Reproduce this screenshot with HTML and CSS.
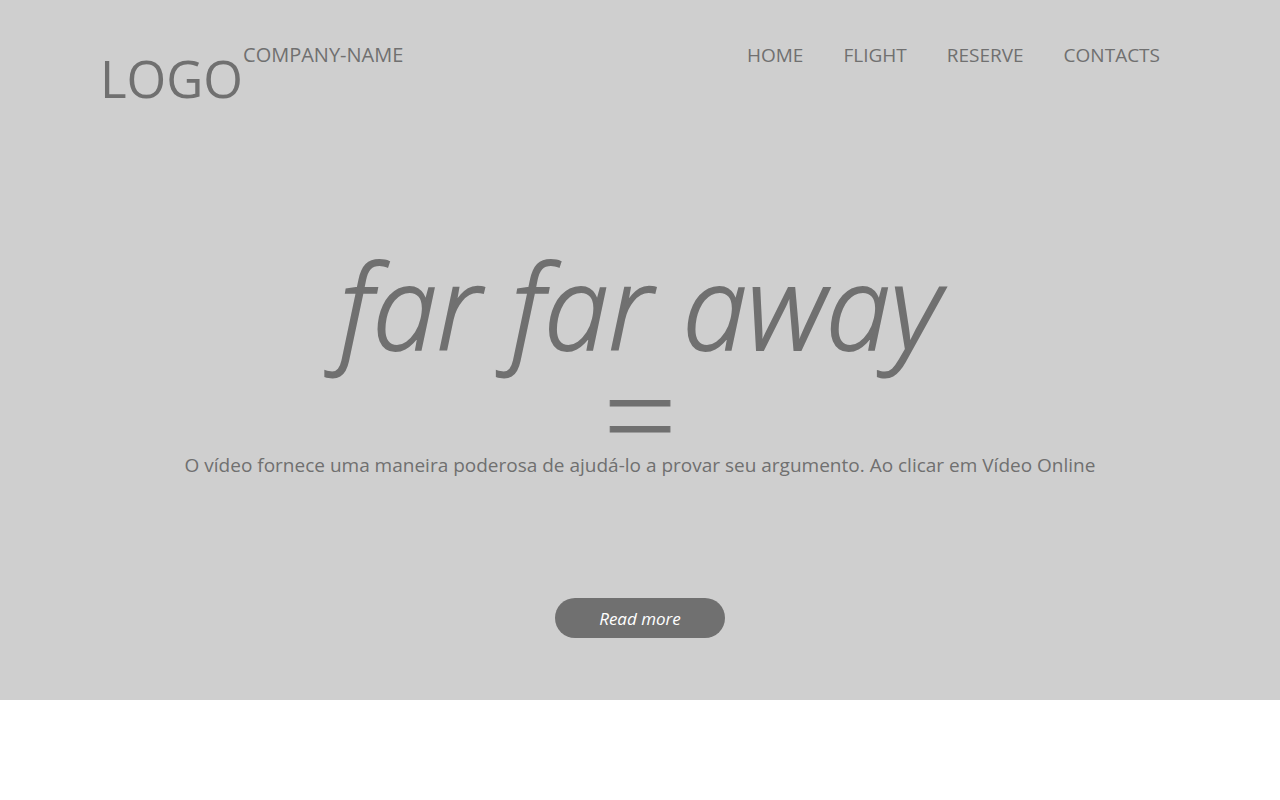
FILE: index.html
```html
<!DOCTYPE html>
<html lang="en">
<head>
<meta charset="utf-8">
<meta name="viewport" content="width=device-width, initial-scale=1">
<title>Far far away</title>
<link rel="stylesheet" href="styles.css">
</head>
<body>
<div class="hero">
  <header class="header">
    <div class="brand">
      <span class="logo">LOGO</span>
      <span class="company">COMPANY-NAME</span>
    </div>
    <nav class="nav">
      <a href="#home">HOME</a>
      <a href="#flight">FLIGHT</a>
      <a href="#reserve">RESERVE</a>
      <a href="#contacts">CONTACTS</a>
    </nav>
  </header>
  <main class="content">
    <h1 class="title">far far away</h1>
    <div class="divider">=</div>
    <p class="lead">O vídeo fornece uma maneira poderosa de ajudá-lo a provar seu argumento. Ao clicar em Vídeo Online</p>
    <button class="more" type="button">Read more</button>
  </main>
</div>
</body>
</html>
```
FILE: styles.css
```css
* { box-sizing: border-box; }
body {
  margin: 0;
  background: #fff;
  color: #707070;
  font-family: "Segoe UI", "Open Sans", "Noto Sans", sans-serif;
  font-size: 19px;
  line-height: 28px;
}
.hero { background: #cfcfcf; padding-bottom: 62px; }
.header {
  display: flex;
  justify-content: space-between;
  padding: 41px 120px 0 100px;
}
.brand { display: flex; }
.logo { font-size: 51px; line-height: 74px; }
.company { font-size: 20px; }
.nav { display: flex; gap: 40px; }
.nav a { color: inherit; text-decoration: none; }
.content {
  display: flex;
  flex-direction: column;
  align-items: center;
  padding-top: 111px;
}
.title {
  margin: 0;
  font-size: 116px;
  line-height: 158px;
  font-weight: 300;
  font-style: italic;
  -webkit-text-stroke: 2px #707070;
}
.divider {
  font-size: 130px;
  line-height: 56px;
  font-weight: 300;
  -webkit-text-stroke: 1px #707070;
}
.lead { margin: 11px 0 0; text-align: center; }
.more {
  margin-top: 119px;
  width: 170px;
  height: 40px;
  border: 0;
  border-radius: 20px;
  background: #707070;
  color: #fff;
  font: italic 17px "Segoe UI", "Open Sans", "Noto Sans", sans-serif;
}
```
